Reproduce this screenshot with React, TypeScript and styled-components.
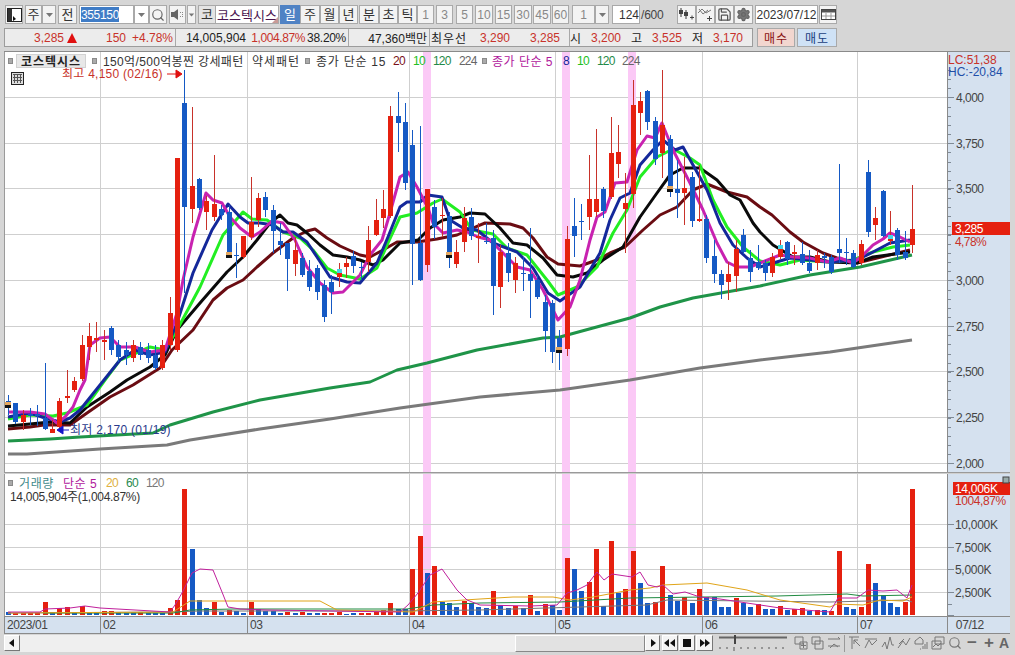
import React from "react";
import styled, { createGlobalStyle } from "styled-components";
import { Settings, Save, Search } from "lucide-react";

const FONT = `"Liberation Sans", "Noto Sans CJK KR", sans-serif`;
const RED = "#c8322a";
const BODY_RED = "#e5200f";
const BODY_BLUE = "#1559c4";

const Global = createGlobalStyle`
  html, body { margin: 0; padding: 0; background: #d6d6d6; }
  #root { width: 1015px; height: 655px; overflow: hidden; }
  * { box-sizing: border-box; }
  svg { display: block; }
`;

const Page = styled.div`
  width: 1015px; height: 655px; background: #d6d6d6; display: flex; flex-direction: column;
  font: 12px ${FONT}; color: #222; padding-top: 5px;
`;
const Bar = styled.div`
  height: 19px; display: flex; align-items: stretch; margin-left: 5px; flex: none;
`;
const Btn = styled.div<{ $w: number; $ml?: number; $on?: boolean; $c?: string; $bg?: string; $s?: number; $end?: boolean }>`
  width: ${(p) => p.$w}px; margin-left: ${(p) => p.$ml ?? 0}px; flex: none;
  display: flex; align-items: center; justify-content: ${(p) => (p.$end ? "flex-end" : "center")};
  background: ${(p) => (p.$on ? "#4f82c4" : p.$bg ?? "#f3f3f3")};
  color: ${(p) => (p.$on ? "#fff" : p.$c ?? "#333")};
  border: 1px solid ${(p) => (p.$on ? "#4f82c4" : "#a9a9a9")};
  font-size: ${(p) => p.$s ?? 13}px; line-height: 1; white-space: nowrap;
`;
const CodeInput = styled.div`
  width: 55px; margin-left: 2px; background: #fff; border: 1px solid #a9a9a9; padding: 1px; display: flex;
  align-items: stretch;
`;
const Selected = styled.span`
  background: #3f7cc6; color: #fff; width: 38px; display: flex; align-items: center; justify-content: center;
  font-size: 12px; letter-spacing: -0.3px;
`;
const NameBox = styled.div`
  width: 63px; flex: none; background: #fff; color: #4a1450; border: 1px solid #a9a9a9; border-left: 0;
  display: flex; align-items: center; justify-content: center; font-size: 13px; position: relative;
`;
const Corner = styled.span`
  position: absolute; right: 0; bottom: 0; width: 0; height: 0;
  border-left: 6px solid transparent; border-bottom: 6px solid #c99a96;
`;
const Count = styled.span`
  width: 28px; display: flex; align-items: center; color: #444; padding-left: 1px; letter-spacing: -0.2px;
`;
const QuoteRow = styled.div`
  height: 19px; margin: 4px 0 0 4px; display: flex; flex: none; align-items: stretch;
`;
const QuoteBox = styled.div`
  width: 749px; display: flex; background: #ececec; border: 1px solid #9c9c9c;
`;
const Cell = styled.div<{ $w: number; $line?: boolean }>`
  width: ${(p) => p.$w}px; flex: none; display: flex; align-items: center; position: relative;
  border-right: ${(p) => (p.$line ? "1px solid #a9a9a9" : "0")};
`;
const Val = styled.span<{ $w: number; $c?: string; $a?: string; $ls?: number }>`
  width: ${(p) => p.$w}px; flex: none; text-align: ${(p) => p.$a ?? "right"}; color: ${(p) => p.$c ?? "#222"};
  white-space: nowrap; font-size: 12px; letter-spacing: ${(p) => p.$ls ?? 0}px;
`;
const TriUp = styled.i`
  width: 0; height: 0; flex: none; margin-left: 3px;
  border-left: 5.500px solid transparent; border-right: 5.500px solid transparent; border-bottom: 10px solid #e01010;
`;
const Trade = styled.div<{ $bg: string; $c: string; $w: number; $ml: number }>`
  width: ${(p) => p.$w}px; margin-left: ${(p) => p.$ml}px; background: ${(p) => p.$bg}; color: ${(p) => p.$c};
  border: 1px solid #a9a9a9; display: flex; align-items: center; justify-content: center; letter-spacing: 1px; font-size: 12px;
`;
const Panel = styled.div`
  margin: 4px 0 0 4px; width: 1006px; flex: none; border-top: 1px solid #8a8a8a; background: #fff;
  display: flex; flex-direction: column; position: relative;
`;
const Pane = styled.div<{ $h: number }>`
  height: ${(p) => p.$h}px; display: flex; position: relative; flex: none;
`;
const Sep = styled.div`
  height: 2px; flex: none; background: #9a9a9a; border-bottom: 1px solid #cfcfcf;
`;
const Axis = styled.div`
  width: 63px; flex: none; background: #d5e1ef; border-left: 1px solid #8a8a8a;
`;
const Plot = styled.div`
  width: 943px; flex: none; border-left: 1px solid #9a9a9a; overflow: hidden;
`;
const Legend = styled.div`
  position: absolute; left: 0; top: 2px; height: 13px; display: flex; align-items: center; white-space: nowrap;
  font-size: 12px; color: #333;
`;
const Dot = styled.i<{ $ml: number }>`
  width: 5px; height: 6px; flex: none; background: #aaa; border: 1px solid #8a8a8a; margin-left: ${(p) => p.$ml}px;
`;
const Item = styled.span<{ $ml: number; $w: number; $c?: string; $ls?: number }>`
  margin-left: ${(p) => p.$ml}px; width: ${(p) => p.$w}px; color: ${(p) => p.$c ?? "#333"}; flex: none;
  letter-spacing: ${(p) => p.$ls ?? 0}px;
`;
const NameChip = styled.b`
  margin-left: 3px; width: 70px; height: 14px; flex: none; display: flex; align-items: center; justify-content: center;
  background: #e8e8e8; border: 1px solid #d2d2d2; font-size: 12px; color: #222; font-weight: 700; letter-spacing: 1px;
`;
const GridBtn = styled.div`
  position: absolute; left: 7px; top: 20px; width: 13px; height: 13px; background: #ddd; border: 1px solid #222;
  padding: 1px;
`;
const VolLegend = styled.div`
  position: absolute; left: 0; top: 2px; display: flex; flex-direction: column; font-size: 12px;
`;
const VolRow = styled.div`
  display: flex; align-items: center; height: 13px; white-space: nowrap;
`;
const TimeAxis = styled.div`
  height: 18px; flex: none; display: flex; background: #d5e1ef; border-top: 1px solid #8a8a8a; border-bottom: 1px solid #8a8a8a;
`;
const TimeCell = styled.div<{ $w: number }>`
  width: ${(p) => p.$w}px; flex: none; border-left: 1px solid #8a8a8a; padding-left: 2px;
  font-size: 12px; line-height: 17px; color: #444; letter-spacing: -0.4px;
`;
const Bottom = styled.div`
  height: 21px; flex: none; margin-left: 4px; width: 1011px; display: flex; align-items: flex-start; background: #d6d6d6;
`;
const Tool = styled.div<{ $w: number; $ml?: number }>`
  width: ${(p) => p.$w}px; height: 16px; margin: 1px 0 0 ${(p) => p.$ml ?? 0}px; flex: none; display: flex; align-items: center; justify-content: center;
  background: #f4f4f4; border: 1px solid #fff; border-right-color: #777; border-bottom-color: #777;
`;
const Track = styled.div`
  width: 495px; height: 17px; margin-top: 1px; flex: none; background: #efefef;
`;
const Thumb = styled.div`
  width: 130px; height: 17px; margin-top: 1px; flex: none; background: #e2e2e2; border: 1px solid #fff; border-right-color: #888; border-bottom-color: #888;
`;
const Slider = styled.div`
  width: 70px; margin: 0 0 0 5px; flex: none;
`;

/* ---------------- data: candles in page pixels ---------------- */
type C = [number, number, number, number, "r" | "b", ("o" | "c")?];
const candles: C[] = [
  [395, 401, 402, 415, "b", "o"], [403, 403, 422, 424, "b"], [410, 415, 422, 430, "r"], [408, 414, 416, 425, "b"],
  [405, 414, 416, 426, "b"], [363, 418, 429, 430, "b"], [420, 429, 433, 433, "r"], [398, 401, 427, 430, "r"],
  [370, 396, 398, 403, "r"], [377, 381, 390, 392, "r"], [335, 345, 379, 381, "r"], [323, 336, 347, 360, "r"],
  [322, 338, 340, 352, "r"], [330, 340, 342, 360, "r"], [326, 328, 350, 355, "b"], [340, 345, 357, 362, "b"],
  [342, 350, 355, 365, "b"], [340, 345, 358, 362, "r"], [342, 347, 355, 360, "b"], [343, 350, 358, 363, "b"],
  [345, 355, 368, 370, "b"], [340, 345, 368, 370, "r"], [297, 313, 345, 350, "r"], [158, 158, 350, 352, "r"],
  [70, 103, 207, 293, "b"], [107, 186, 209, 223, "r"], [178, 179, 208, 210, "b"], [196, 201, 212, 230, "r"],
  [155, 204, 217, 221, "r"], [205, 209, 215, 220, "b"], [205, 212, 252, 257, "b", "o"], [243, 255, 256, 278, "b"],
  [236, 236, 257, 259, "r"], [177, 222, 237, 240, "r"], [193, 198, 220, 227, "r"], [192, 197, 210, 217, "b"],
  [205, 210, 231, 253, "b"], [223, 241, 245, 255, "b"], [243, 243, 259, 291, "b"], [237, 250, 264, 276, "r"],
  [253, 258, 275, 277, "b"], [260, 271, 287, 291, "b"], [265, 268, 292, 300, "b"], [280, 285, 317, 322, "b"],
  [275, 282, 292, 314, "b"], [263, 273, 277, 287, "r", "c"], [257, 263, 267, 278, "r"], [251, 256, 266, 273, "b"],
  [262, 267, 268, 280, "b"], [226, 240, 262, 272, "r"], [199, 220, 235, 236, "r"], [190, 209, 218, 228, "r"],
  [106, 116, 216, 218, "r"], [92, 116, 123, 152, "b"], [103, 122, 183, 190, "b"], [130, 145, 244, 285, "b"],
  [126, 243, 280, 281, "b"], [189, 189, 265, 272, "r"], [200, 207, 227, 239, "b"], [198, 215, 216, 237, "r"],
  [212, 216, 252, 268, "b", "o"], [240, 252, 264, 268, "r"], [207, 218, 242, 252, "r"], [208, 217, 236, 240, "b"],
  [223, 236, 238, 263, "r"], [223, 241, 242, 244, "b"], [230, 238, 286, 315, "b"], [245, 252, 287, 308, "r"],
  [243, 253, 273, 282, "b"], [257, 263, 280, 293, "r"], [257, 273, 274, 291, "b"], [228, 274, 281, 318, "b"],
  [275, 280, 297, 299, "b"], [295, 302, 331, 352, "b"], [300, 303, 352, 363, "b"], [330, 338, 347, 370, "b", "o"],
  [226, 239, 349, 356, "r"], [198, 226, 236, 257, "b"], [204, 221, 222, 240, "b"], [155, 199, 217, 230, "r"],
  [129, 199, 212, 217, "r"], [187, 189, 211, 218, "b"], [117, 153, 197, 199, "r"], [125, 152, 164, 178, "r"],
  [173, 203, 209, 253, "r"], [80, 105, 194, 208, "r"], [92, 101, 113, 135, "r"], [90, 91, 122, 130, "b"],
  [117, 121, 159, 165, "b"], [70, 125, 153, 178, "r"], [135, 139, 186, 197, "b", "o"], [160, 189, 193, 218, "b"],
  [157, 188, 193, 225, "r"], [172, 177, 221, 227, "b"], [165, 219, 221, 222, "r"], [215, 219, 258, 263, "b"],
  [240, 256, 274, 283, "b"], [270, 274, 285, 299, "b"], [262, 274, 282, 300, "r"], [240, 249, 276, 292, "r"],
  [229, 235, 252, 254, "b"], [250, 258, 272, 282, "b"], [245, 262, 268, 270, "b"], [260, 263, 273, 281, "b"],
  [253, 257, 273, 277, "r"], [240, 249, 257, 259, "r", "c"], [241, 242, 259, 265, "b"], [245, 252, 254, 265, "r"],
  [242, 254, 263, 265, "b"], [250, 263, 271, 273, "b"], [250, 255, 263, 270, "r"], [253, 256, 258, 268, "b"],
  [255, 257, 272, 274, "b"], [164, 249, 253, 263, "b"], [238, 252, 253, 265, "b"], [250, 253, 267, 268, "b"],
  [240, 244, 263, 265, "r"], [160, 172, 232, 237, "b"], [207, 218, 225, 240, "r"], [190, 191, 236, 237, "b"],
  [211, 239, 241, 245, "r", "c"], [228, 230, 255, 260, "b"], [231, 252, 258, 260, "b"], [185, 229, 245, 253, "r"],
];
const vols: [("r" | "b"), number][] = (
  "b612 r613 r613 r613 r613 r602 b612 r608 r607 b612 r606 b612 b612 r611 r611 b612 b613 b612 r612 b613 b613 b613 r608 r600 r489 b549 b600 b608 r602 b612 r610 b611 b613 r602 b609 b611 b611 b613 r612 b613 r612 b613 b613 r613 r613 r612 b614 b613 r613 r613 r612 r610 r603 b609 b609 r569 r536 b573 r566 b602 b603 b607 r601 b603 b607 b608 r591 b605 b608 r606 b608 r595 b611 r604 b605 b610 r558 b569 b591 r582 r549 b606 r541 b593 r589 r551 b583 b603 r602 r566 b595 b601 r597 b603 r589 b597 b597 b607 b607 r598 b603 b607 r604 b609 b609 r606 b610 r609 r608 b611 r610 b610 r611 r551 b607 b609 r607 r564 b583 b595 b603 b607 r602 r489"
).split(" ").map((s) => [s[0] as "r" | "b", Number(s.slice(1))]);

const black = "8,426 30,424 50,422 70,423 87,407 110,392 127,380 150,367 165,355 177,330 200,303 227,272 243,257 257,240 270,223 280,215 288,223 297,225 307,233 320,245 333,255 347,257 360,260 373,265 383,260 400,243 418,240 430,228 443,220 460,217 470,213 485,214 500,228 513,243 527,245 543,258 557,275 573,277 587,273 603,260 623,247 640,217 657,193 670,175 683,168 700,168 717,180 730,195 740,200 753,223 760,232 773,245 793,257 810,257 830,262 857,263 873,257 910,252";
const maroon = "8,429 30,427 44,425 70,425 87,413 110,397 133,385 160,368 172,350 193,330 213,300 227,288 243,280 257,267 273,253 293,238 307,231 315,229 327,238 340,246 360,255 370,257 383,250 397,242 417,242 437,239 457,235 473,228 485,223 510,224 523,228 533,238 547,257 558,264 580,266 597,260 610,253 625,247 643,230 660,215 677,207 693,190 707,184 727,192 747,197 760,207 772,215 790,232 803,242 823,253 837,258 857,263 873,259 910,250";
const magenta = "8,412 30,412 45,414 57,423 65,417 73,407 80,390 85,380 90,345 100,338 110,337 120,347 135,347 150,352 165,350 177,313 183,280 193,237 206,193 213,200 222,203 230,217 240,228 252,237 260,232 272,221 283,223 295,240 307,267 320,283 333,293 343,292 360,275 370,255 382,240 390,213 400,177 408,172 417,187 428,208 433,223 443,233 457,230 467,232 478,237 490,240 503,253 517,267 530,270 543,290 558,320 570,307 580,280 590,240 597,217 605,212 615,183 627,182 637,150 647,136 655,138 662,123 673,150 690,183 703,210 717,243 727,262 737,267 750,267 760,263 780,255 793,257 810,258 827,262 840,258 853,263 863,255 873,245 883,239 890,233 900,237 910,242";
const navy = "8,417 30,413 45,418 60,422 70,418 80,410 100,385 120,360 135,350 150,355 165,352 177,323 193,273 212,230 228,204 240,217 248,223 260,223 273,225 283,232 293,232 307,242 317,257 330,277 347,282 360,283 377,263 388,237 400,207 407,202 420,202 428,195 442,197 450,220 463,228 477,230 493,243 517,252 533,268 548,293 560,301 580,287 600,253 610,220 620,198 630,193 640,165 653,150 663,140 675,150 683,147 693,165 707,190 720,223 733,245 747,258 760,267 790,258 830,262 857,260 873,252 890,243 910,240";
const lime = "8,419 30,415 53,416 67,413 87,405 105,380 120,360 150,347 165,350 177,330 200,287 223,235 243,212 252,219 267,220 283,232 300,238 313,250 327,268 340,275 360,279 377,268 388,243 400,217 417,213 433,203 442,199 460,212 472,230 493,234 507,248 527,255 547,280 558,295 577,287 597,267 613,233 627,210 640,177 657,157 673,149 690,158 700,165 713,200 727,227 743,247 760,261 780,265 800,260 827,262 853,260 873,252 893,247 910,245";
const ma120 = "8,441 50,439 80,437 153,433 170,425 213,412 260,400 330,388 370,382 397,370 427,363 477,350 543,338 560,337 593,328 630,318 660,307 693,298 760,286 810,275 860,267 912,255";
const ma224 = "8,454 27,454 100,449 167,445 190,440 260,429 330,419 400,408 480,397 560,390 630,380 700,368 760,360 830,352 912,340";

const vMag = "8,612 40,612 45,609 70,608 85,606 100,608 170,612 175,605 182,593 192,573 200,569 213,570 222,592 228,607 240,609 267,610 400,612 408,605 418,593 430,575 442,569 457,590 467,600 480,605 530,606 557,605 567,593 577,590 587,585 597,572 604,580 612,574 632,577 640,572 648,585 657,587 663,585 673,594 685,592 700,597 720,599 747,603 780,608 830,612 838,598 857,598 868,590 883,591 897,590 907,598 912,585";
const vOrg = "8,613 173,612 190,601 320,601 337,610 413,612 433,602 480,599 513,597 553,597 570,600 593,597 630,590 650,588 663,585 707,583 747,590 780,600 830,607 837,604 863,605 880,600 903,601 912,597";
const vGrn = "43,613 173,613 190,610 233,609 407,609 433,605 480,603 560,602 630,598 703,597 777,596 847,594 863,596 912,595";
const vGry = "8,613 170,612 200,611 400,611 480,610 647,605 667,600 830,602 907,600 912,602";

const X = (i: number) => Math.round(8 + 7.35 * i);
const priceGrid = [97, 143, 188, 234, 280, 326, 371, 417, 463];
const volGrid = [524, 547, 569, 592];
const vLines = [100, 247, 409, 555, 702, 857];
const bands = [427, 566, 632];

const MaLine = styled.polyline<{ $c: string }>`
  fill: none; stroke: ${(p) => p.$c}; stroke-width: 3px; stroke-linejoin: round;
`;
const VolLine = styled.polyline<{ $c: string }>`
  fill: none; stroke: ${(p) => p.$c}; stroke-width: 1px;
`;

function Candles() {
  return (
    <g shapeRendering="crispEdges">
      {candles.map(([hi, top, bot, lo, col, mark], i) => {
        const x = X(i);
        const fill = col === "r" ? BODY_RED : BODY_BLUE;
        const wick = col === "r" ? RED : BODY_BLUE;
        return (
          <g key={i}>
            <rect x={x} y={hi} width={1} height={lo - hi} fill={wick} />
            <rect x={x - 2} y={top} width={5} height={Math.max(bot - top, 1)} fill={fill} />
            {mark === "o" && (
              <g>
                <rect x={x - 3} y={bot} width={6} height={3} fill="#e5a860" />
                <rect x={x - 3} y={bot + 3} width={6} height={3} fill="#111" />
              </g>
            )}
            {mark === "c" && <rect x={x - 2} y={top - 4} width={5} height={4} fill="#3fd8e8" />}
          </g>
        );
      })}
    </g>
  );
}

function PriceChart() {
  return (
    <svg width={942} height={420} viewBox="5 52 942 420">
      {priceGrid.map((y) => <line key={y} x1={5} x2={947} y1={y + 0.5} y2={y + 0.5} stroke="#cfcfcf" />)}
      {vLines.map((x) => <line key={x} x1={x + 0.5} x2={x + 0.5} y1={52} y2={472} stroke="#cfcfcf" />)}
      {bands.map((x) => <rect key={x} x={x - 4} y={52} width={8} height={420} fill="#fbc9f6" />)}
      <MaLine points={ma224} $c="#7a7a7a" />
      <MaLine points={ma120} $c="#1f9448" />
      <MaLine points={maroon} $c="#6a0c12" />
      <MaLine points={black} $c="#0a0a0a" />
      <MaLine points={lime} $c="#22ee22" />
      <MaLine points={navy} $c="#14289a" />
      <MaLine points={magenta} $c="#c822b0" />
      <Candles />
      <text x={62} y={78} fontSize={12} fill={RED} fontFamily={FONT} letterSpacing={0.25}>최고 4,150 (02/16)</text>
      <path d="M167 74h9M176 70l6 4-6 4z" stroke="#e01010" fill="#e01010" />
      <path d="M57 430l6-4v8zM63 430h6" stroke="#1414c8" fill="#1414c8" />
      <text x={70} y={434} fontSize={12} fill="#2a3a8c" fontFamily={FONT} letterSpacing={0.25}>최저 2,170 (01/19)</text>
    </svg>
  );
}

function PriceAxis() {
  const labels: [number, string][] = [[97, "4,000"], [143, "3,750"], [188, "3,500"], [280, "3,000"], [326, "2,750"], [371, "2,500"], [417, "2,250"], [463, "2,000"]];
  const minors: number[] = [];
  for (let y = 97 - 27; y < 472; y += 9.15) minors.push(Math.round(y));
  return (
    <svg width={62} height={420} viewBox="948 52 62 420">
      <g stroke="#7f8a96" shapeRendering="crispEdges">
        {minors.map((y) => <line key={y} x1={948} x2={951} y1={y + 0.5} y2={y + 0.5} />)}
        {priceGrid.map((y) => <line key={y} x1={948} x2={954} y1={y + 0.5} y2={y + 0.5} />)}
      </g>
      {labels.map(([y, t]) => <text key={y} x={956} y={y + 5} fontSize={12} fill="#444" fontFamily={FONT} letterSpacing={-0.5}>{t}</text>)}
      <text x={948} y={64} fontSize={12} fill={RED} fontFamily={FONT}>LC:51,38</text>
      <text x={948} y={76} fontSize={12} fill="#1f4fa8" fontFamily={FONT}>HC:-20,84</text>
      <rect x={952} y={222} width={58} height={13} fill="#e5200f" />
      <text x={955} y={233} fontSize={12} fill="#fff" fontFamily={FONT} letterSpacing={-0.4}>3,285</text>
      <text x={955} y={246} fontSize={12} fill={RED} fontFamily={FONT} letterSpacing={-0.6}>4,78%</text>
    </svg>
  );
}

function VolumeChart() {
  return (
    <svg width={942} height={142} viewBox="5 474 942 142">
      {bands.map((x) => <rect key={x} x={x - 4} y={474} width={8} height={141} fill="#fbc9f6" />)}
      {volGrid.map((y) => <line key={y} x1={5} x2={947} y1={y + 0.5} y2={y + 0.5} stroke="#cfcfcf" />)}
      {vLines.map((x) => <line key={x} x1={x + 0.5} x2={x + 0.5} y1={474} y2={616} stroke="#cfcfcf" />)}
      <g shapeRendering="crispEdges">
        {vols.map(([c, y], i) => (
          <rect key={i} x={X(i) - 2} y={y} width={5} height={615 - y} fill={c === "r" ? BODY_RED : BODY_BLUE} />
        ))}
      </g>
      <VolLine points={vGry} $c="#777" />
      <VolLine points={vGrn} $c="#1f8a40" />
      <VolLine points={vOrg} $c="#e0a418" />
      <VolLine points={vMag} $c="#c0209c" />
    </svg>
  );
}

function VolumeAxis() {
  const labels: [number, string][] = [[524, "10,000K"], [547, "7,500K"], [569, "5,000K"], [592, "2,500K"]];
  return (
    <svg width={62} height={142} viewBox="948 474 62 142">
      <g stroke="#7f8a96" shapeRendering="crispEdges">
        {volGrid.map((y) => <line key={y} x1={948} x2={954} y1={y + 0.5} y2={y + 0.5} />)}
        <line x1={948} x2={952} y1={604.5} y2={604.5} />
        <line x1={948} x2={954} y1={615.5} y2={615.5} />
      </g>
      {labels.map(([y, t]) => <text key={y} x={955} y={y + 5} fontSize={12} fill="#444" fontFamily={FONT} letterSpacing={-0.3}>{t}</text>)}
      <rect x={953} y={482} width={57} height={13} fill="#e5200f" />
      <text x={955} y={493} fontSize={12} fill="#fff" fontFamily={FONT} letterSpacing={-0.3}>14,006K</text>
      <text x={955} y={505} fontSize={12} fill={RED} fontFamily={FONT} letterSpacing={-0.4}>1004,87%</text>
      <rect x={1003} y={477} width={6} height={6} fill="#9aa" stroke="#444" />
    </svg>
  );
}

const Caret = () => (
  <svg width={9} height={6} viewBox="0 0 9 6"><path d="M1 1h7L4.500 5z" fill="#777" /></svg>
);
const WindowIcon = () => (
  <svg width={15} height={14} viewBox="0 0 15 14"><rect x=".5" y=".5" width="14" height="13" fill="#fff" stroke="#222" /><rect x="1" y="1" width="4" height="12" fill="#333" /><path d="M6 8l3 3-3 2z" fill="#111" /></svg>
);
const Speaker = () => (
  <svg width={15} height={13} viewBox="0 0 15 13"><path d="M1 4h3l4-3v11L4 9H1z" fill="#666" /><path d="M10 4h1v1h-1zM10 8h1v1h-1zM12 4h1v1h-1zM12 6h1v1h-1zM12 8h1v1h-1z" fill="#888" /></svg>
);
const CandlePlus = () => (
  <svg width={17} height={15} viewBox="0 0 17 15"><path d="M3 1v9M8 3v9" stroke="#333" /><rect x="1" y="3" width="4" height="4" fill="#444" /><rect x="6" y="5" width="4" height="4" fill="#444" /><path d="M12 10h4v1h-4zM13.500 8.500h1v4h-1z" fill="#444" /></svg>
);
const LinePlus = () => (
  <svg width={17} height={15} viewBox="0 0 17 15"><path d="M1 6l4-4 4 4 5-3M2 2l4 5 5-4" fill="none" stroke="#777" /><path d="M10 11h5v1h-5zM12 9h1v5h-1z" fill="#444" /></svg>
);
const CalIcon = () => (
  <svg width={15} height={13} viewBox="0 0 15 13"><rect x=".5" y="1.500" width="14" height="10" fill="#fff" stroke="#444" /><rect x="1" y="2" width="13" height="2.500" fill="#555" /><path d="M5 5v6M10 5v6M1 8h13" stroke="#999" /></svg>
);
const GridIcon = () => (
  <svg width={9} height={9} viewBox="0 0 9 9"><path d="M0 .5h9M0 3.500h9M0 6.500h9M1.500 0v9M4.500 0v9M7.500 0v9" stroke="#555" /></svg>
);
const Play = ({ d }: { d: string }) => (
  <svg width={12} height={10} viewBox="0 0 12 10"><path d={d} fill="#111" /></svg>
);
const SliderArt = () => (
  <svg width={70} height={18} viewBox="0 0 70 18">
    <path d="M1 3.500h68" stroke="#666" strokeWidth={2} />
    <path d="M17 1v9" stroke="#444" strokeWidth={2} />
    <path d="M2 13v2M9 13v2M16 13v4M23 13v2M30 13v2M37 13v2M44 13v2M51 13v2M58 13v2M65 13v2" stroke="#555" />
  </svg>
);
const Ico = ({ d, w = 14 }: { d: string; w?: number }) => (
  <svg width={w} height={14} viewBox={`0 0 ${w} 14`}><path d={d} fill="none" stroke="#777" /></svg>
);
const Icons = styled.div`
  display: flex; align-items: center; height: 18px; margin-left: 6px; gap: 3px; flex: none;
`;
const IconBreak = styled.div`
  width: 1px; height: 17px; background: #999;
`;
const Glyph = styled.span<{ $s?: number; $ml?: number }>`
  font: 700 ${(p) => p.$s ?? 14}px ${FONT}; color: #666; width: 12px; text-align: center; line-height: 16px;
  margin-left: ${(p) => p.$ml ?? 0}px;
`;

export default function App() {
  return (
    <Page>
      <Global />
      <Bar>
        <Btn $w={18}><WindowIcon /></Btn>
        <Btn $w={17} $ml={2}>주</Btn>
        <Btn $w={14}><Caret /></Btn>
        <Btn $w={19} $ml={2}>전</Btn>
        <CodeInput><Selected>355150</Selected></CodeInput>
        <Btn $w={15} $bg="#fff"><Caret /></Btn>
        <Btn $w={18}><Search size={14} color="#666" /></Btn>
        <Btn $w={17} $ml={2}><Speaker /></Btn>
        <Btn $w={9} $ml={1}><Caret /></Btn>
        <Btn $w={18} $ml={2} $bg="#e4e4e4">코</Btn>
        <NameBox>코스텍시스<Corner /></NameBox>
        <Btn $w={20} $ml={1} $on>일</Btn>
        <Btn $w={20}>주</Btn>
        <Btn $w={19}>월</Btn>
        <Btn $w={19}>년</Btn>
        <Btn $w={20} $ml={1}>분</Btn>
        <Btn $w={19}>초</Btn>
        <Btn $w={19}>틱</Btn>
        <Btn $w={17} $s={12} $c="#888">1</Btn>
        <Btn $w={17} $s={12} $ml={2} $c="#888">3</Btn>
        <Btn $w={17} $s={12} $ml={3} $c="#888">5</Btn>
        <Btn $w={18} $s={12} $ml={2} $c="#888">10</Btn>
        <Btn $w={17} $s={12} $ml={2} $c="#888">15</Btn>
        <Btn $w={18} $s={12} $ml={2} $c="#888">30</Btn>
        <Btn $w={18} $s={12} $ml={1} $c="#888">45</Btn>
        <Btn $w={17} $s={12} $ml={1} $c="#888">60</Btn>
        <Btn $w={23} $s={12} $ml={3} $c="#888">1</Btn>
        <Btn $w={14}><Caret /></Btn>
        <Btn $w={28} $s={12} $ml={3} $bg="#fff" $end>124</Btn>
        <Count>/600</Count>
        <Btn $w={19} $ml={9}><CandlePlus /></Btn>
        <Btn $w={19}><LinePlus /></Btn>
        <Btn $w={19}><Save size={15} color="#555" /></Btn>
        <Btn $w={19}><Settings size={15} color="#666" fill="#777" /></Btn>
        <Btn $w={63} $s={12} $ml={2} $bg="#fff">2023/07/12</Btn>
        <Btn $w={18} $ml={1}><CalIcon /></Btn>
      </Bar>
      <QuoteRow>
        <QuoteBox>
          <Cell $w={171} $line>
            <Val $w={59} $c={RED}>3,285</Val>
            <TriUp />
            <Val $w={49} $c={RED}>150</Val>
            <Val $w={47} $c={RED}>+4.78%</Val>
          </Cell>
          <Cell $w={173} $line>
            <Val $w={70}>14,005,904</Val>
            <Val $w={59} $c={RED} $ls={-0.4}>1,004.87%</Val>
            <Val $w={41} $ls={-0.3}>38.20%</Val>
          </Cell>
          <Cell $w={81} $line>
            <Val $w={78}>47,360백만</Val>
          </Cell>
          <Cell $w={140} $line>
            <Val $w={38} $a="center" $ls={1}>최우선</Val>
            <Val $w={42} $c={RED}>3,290</Val>
            <Val $w={50} $c={RED}>3,285</Val>
          </Cell>
          <Cell $w={182}>
            <Val $w={11}>시</Val>
            <Val $w={40} $c={RED}>3,200</Val>
            <Val $w={21}>고</Val>
            <Val $w={40} $c={RED}>3,525</Val>
            <Val $w={21}>저</Val>
            <Val $w={40} $c={RED}>3,170</Val>
          </Cell>
        </QuoteBox>
        <Trade $w={38} $ml={4} $bg="#f2d6cf" $c="#8a1010">매수</Trade>
        <Trade $w={40} $ml={2} $bg="#cfe2f6" $c="#1a3f80">매도</Trade>
      </QuoteRow>
      <Panel>
        <Pane $h={420}>
          <Plot><PriceChart /></Plot>
          <Axis><PriceAxis /></Axis>
          <Legend>
            <Dot $ml={4} />
            <NameChip>코스텍시스</NameChip>
            <Dot $ml={6} />
            <Item $ml={6} $w={140} $ls={0.35}>150억/500억봉찐 강세패턴</Item>
            <Item $ml={9} $w={48} $ls={1}>약세패턴</Item>
            <Dot $ml={5} />
            <Item $ml={6} $w={69} $ls={0.75}>종가 단순 15</Item>
            <Item $ml={8} $w={12} $c="#7a1018" $ls={-0.6}>20</Item>
            <Item $ml={8} $w={12} $c="#22c022" $ls={-0.6}>10</Item>
            <Item $ml={8} $w={17} $c="#1f8a48" $ls={-0.8}>120</Item>
            <Item $ml={9} $w={17} $c="#666" $ls={-0.8}>224</Item>
            <Dot $ml={6} />
            <Item $ml={5} $w={63} $c="#b0189c" $ls={0.5}>종가 단순 5</Item>
            <Item $ml={8} $w={6} $c="#14289a">8</Item>
            <Item $ml={8} $w={12} $c="#22c022" $ls={-0.6}>10</Item>
            <Item $ml={8} $w={17} $c="#1f8a48" $ls={-0.8}>120</Item>
            <Item $ml={8} $w={18} $c="#666" $ls={-0.8}>224</Item>
          </Legend>
          <GridBtn><GridIcon /></GridBtn>
        </Pane>
        <Sep />
        <Pane $h={142}>
          <Plot><VolumeChart /></Plot>
          <Axis><VolumeAxis /></Axis>
          <VolLegend>
            <VolRow>
              <Dot $ml={4} />
              <Item $ml={6} $w={34} $c="#3f8a8a" $ls={0.6}>거래량</Item>
              <Item $ml={10} $w={34} $c="#b0189c" $ls={0.5}>단순 5</Item>
              <Item $ml={9} $w={11} $c="#e0b040" $ls={-0.6}>20</Item>
              <Item $ml={9} $w={12} $c="#2a8a50" $ls={-0.6}>60</Item>
              <Item $ml={8} $w={17} $c="#777" $ls={-0.8}>120</Item>
            </VolRow>
            <VolRow><Item $ml={6} $w={135} $ls={-0.3}>14,005,904주(1,004.87%)</Item></VolRow>
          </VolLegend>
        </Pane>
        <TimeAxis>
          <TimeCell $w={96}>2023/01</TimeCell>
          <TimeCell $w={147}>02</TimeCell>
          <TimeCell $w={162}>03</TimeCell>
          <TimeCell $w={146}>04</TimeCell>
          <TimeCell $w={147}>05</TimeCell>
          <TimeCell $w={155}>06</TimeCell>
          <TimeCell $w={90}>07</TimeCell>
          <TimeCell $w={63}>&nbsp;&nbsp;07/12</TimeCell>
        </TimeAxis>
      </Panel>
      <Bottom>
        <Tool $w={16}><Play d="M3 5l5-4v8z" /></Tool>
        <Track />
        <Thumb />
        <Tool $w={15}><Play d="M4 1l5 4-5 4z" /></Tool>
        <Tool $w={16} $ml={2}><Play d="M6 5l5-4v8zM0 5l5-4v8z" /></Tool>
        <Tool $w={16} $ml={1}><Play d="M2 1h8v8H2z" /></Tool>
        <Tool $w={17} $ml={1}><Play d="M1 1l5 4-5 4zM6 1l5 4-5 4z" /></Tool>
        <Slider><SliderArt /></Slider>
        <Icons>
          <Ico d="M1 1h8v7H1zM6 6h7v7H6zM9.500 7v5M7 9.500h5" w={14} />
          <Ico d="M1 1h8v7H1zM4 5h8v8H4z" w={13} />
          <Ico d="M1 3h12M1 10h12M3 12l4-4 4 3M11 1l2 2" w={14} />
          <IconBreak />
          <Ico d="M1 1h10M4 1v12M6 4l6 6M6 4h4M6 4v4" w={13} />
          <Ico d="M1 12l4-8 3 5 5-5M1 3h12" w={14} />
          <Ico d="M1 11l3-5 2 7 3-12 2 8h2" w={13} />
          <Ico d="M1 12l5-7 3 4 4-7M2 8l5-5" w={14} />
          <Ico d="M1 5l5-4 3 3v4H1zM6 13h1M9 13v-3M11 13V8M13 13V6" w={14} />
          <Ico d="M4 1h9v7H4zM1 5h9v8H1zM2 11l3-3 2 2 3-3" w={14} />
          <Search size={14} color="#777" />
          <Glyph $s={17} $ml={1}>−</Glyph>
          <Glyph $s={17} $ml={2}>+</Glyph>
          <Glyph>A</Glyph>
        </Icons>
      </Bottom>
    </Page>
  );
}
